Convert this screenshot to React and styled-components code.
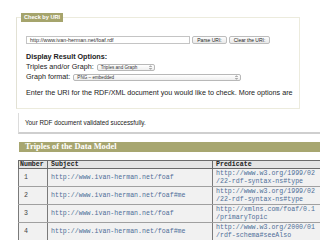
import React from 'react'
import styled, { createGlobalStyle } from 'styled-components'

const GlobalStyle = createGlobalStyle`
  html, body {
    margin: 0;
    padding: 0;
    background: #fff;
  }
  body {
    font-family: "Liberation Sans", Arial, sans-serif;
    color: #222;
  }
`

// predicate split where the narrow column wraps it
const triples = [
  { subject: 'http://www.ivan-herman.net/foaf', predicate: ['http://www.w3.org/1999/02', '/22-rdf-syntax-ns#type'] },
  { subject: 'http://www.ivan-herman.net/foaf#me', predicate: ['http://www.w3.org/1999/02', '/22-rdf-syntax-ns#type'] },
  { subject: 'http://www.ivan-herman.net/foaf', predicate: ['http://xmlns.com/foaf/0.1', '/primaryTopic'] },
  { subject: 'http://www.ivan-herman.net/foaf#me', predicate: ['http://www.w3.org/2000/01', '/rdf-schema#seeAlso'] },
  { subject: 'http://www.ivan-herman.net/foaf#me', predicate: ['http://xmlns.com/foaf/0.1', '/name'] },
]

const Page = styled.div`
  width: 320px;
  height: 240px;
  overflow: hidden;
  box-sizing: border-box;
  padding: 13px 0 0 16px;
`

const Fieldset = styled.fieldset`
  width: 284px;
  box-sizing: border-box;
  margin: 0;
  padding: 0 0 0 4px;
  border: 1px solid #ecebdd;
  border-left-color: #e2e1d4;
`

const Legend = styled.legend`
  background: #a5a46c;
  color: #fff;
  font-size: 5.6px;
  font-weight: bold;
  height: 9px;
  line-height: 9px;
  padding: 0 3px;
`

const FormBody = styled.div`
  padding: 14px 0 10px 5px;
`

const UriRow = styled.div`
  display: flex;
  align-items: center;
  gap: 2px;
`

const UriInput = styled.div`
  width: 164px;
  height: 8px;
  box-sizing: border-box;
  border: 1px solid #c4c4c4;
  font-size: 5.4px;
  line-height: 6px;
  padding-left: 3px;
  color: #333;
`

const Button = styled.div`
  width: ${p => p.$w}px;
  height: 8px;
  box-sizing: border-box;
  border: 1px solid #bdbdbd;
  border-radius: 2px;
  background: linear-gradient(#fdfdfd, #e9e9e9);
  font-size: 5px;
  line-height: 6px;
  text-align: center;
  color: #222;
`

const OptionsTitle = styled.div`
  margin-top: 8px;
  font-size: 7.2px;
  font-weight: bold;
  line-height: 10px;
`

const OptionLine = styled.div`
  display: flex;
  align-items: center;
  gap: 3px;
  font-size: 7.2px;
  line-height: 10px;
`

const Select = styled.div`
  width: ${p => p.$w}px;
  height: 7px;
  box-sizing: border-box;
  border: 1px solid #b8b8b8;
  border-radius: 2px;
  background: linear-gradient(#fff, #eeeeee);
  display: flex;
  align-items: center;
  justify-content: space-between;
  padding: 0 2px 0 3px;
  font-size: 4.6px;
  line-height: 5px;
  color: #333;
`

const Hint = styled.div`
  margin-top: 6px;
  font-size: 7.2px;
  line-height: 10px;
  white-space: nowrap;
`

const SuccessBox = styled.div`
  margin: 4px 0 0 2px;
  height: 21px;
  box-sizing: border-box;
  border-left: 1px solid #dcdcdc;
  border-bottom: 2px solid #cfcfcf;
  padding-left: 6px;
  display: flex;
  align-items: center;
  font-size: 6.3px;
`

const SectionBar = styled.div`
  margin: 8px 0 0 3px;
  height: 10px;
  background: #a7a670;
  color: #fff;
  font-family: "Liberation Serif", "Times New Roman", serif;
  font-weight: bold;
  font-size: 8.4px;
  line-height: 10px;
  padding-left: 6px;
`

const Table = styled.table`
  margin: 8px 0 0 2px;
  border-collapse: collapse;
  table-layout: fixed;
  width: 330px;
  font-family: "Liberation Mono", "Courier New", monospace;
  font-size: 6.6px;
`

const Th = styled.th`
  background: #e4e4e4;
  border: 1px solid #6a6a6a;
  text-align: left;
  font-weight: bold;
  color: #222;
  height: 7px;
  line-height: 7px;
  padding: 0 ${p => (p.$num ? 1 : 3)}px;
  overflow: hidden;
  white-space: nowrap;
`

const Td = styled.td`
  background: #f1f1f1;
  border: 1px solid #7a7a7a;
  border-top-color: #a0a0a0;
  border-bottom-color: #a0a0a0;
  color: ${p => (p.$num ? '#444' : '#4f6f98')};
  height: 17px;
  line-height: 7.6px;
  padding: 0 ${p => (p.$num ? 5 : 3)}px;
  vertical-align: middle;
  overflow: hidden;
  white-space: nowrap;
`

const UpDown = () => (
  <svg width="3" height="5" viewBox="0 0 6 10">
    <path d="M1 4 L3 1.5 L5 4 M1 6 L3 8.5 L5 6" fill="none" stroke="#444" strokeWidth="1.2" />
  </svg>
)

export default function App() {
  return (
    <>
      <GlobalStyle />
      <Page>
        <Fieldset>
          <Legend>Check by URI</Legend>
          <FormBody>
            <UriRow>
              <UriInput>http://www.ivan-herman.net/foaf.rdf</UriInput>
              <Button $w={35}>Parse URI:</Button>
              <Button $w={41}>Clear the URI:</Button>
            </UriRow>
            <OptionsTitle>Display Result Options:</OptionsTitle>
            <OptionLine>
              Triples and/or Graph:
              <Select $w={58}>Triples and Graph <UpDown /></Select>
            </OptionLine>
            <OptionLine>
              Graph format:
              <Select $w={168}>PNG – embedded <UpDown /></Select>
            </OptionLine>
            <Hint>Enter the URI for the RDF/XML document you would like to check. More options are</Hint>
          </FormBody>
        </Fieldset>

        <SuccessBox>Your RDF document validated successfully.</SuccessBox>

        <SectionBar>Triples of the Data Model</SectionBar>

        <Table>
          <colgroup>
            <col style={{ width: 29 }} />
            <col style={{ width: 165 }} />
            <col style={{ width: 136 }} />
          </colgroup>
          <thead>
            <tr>
              <Th $num>Number</Th>
              <Th>Subject</Th>
              <Th>Predicate</Th>
            </tr>
          </thead>
          <tbody>
            {triples.map((t, i) => (
              <tr key={i}>
                <Td $num>{i + 1}</Td>
                <Td>{t.subject}</Td>
                <Td>{t.predicate[0]}<br />{t.predicate[1]}</Td>
              </tr>
            ))}
          </tbody>
        </Table>
      </Page>
    </>
  )
}
